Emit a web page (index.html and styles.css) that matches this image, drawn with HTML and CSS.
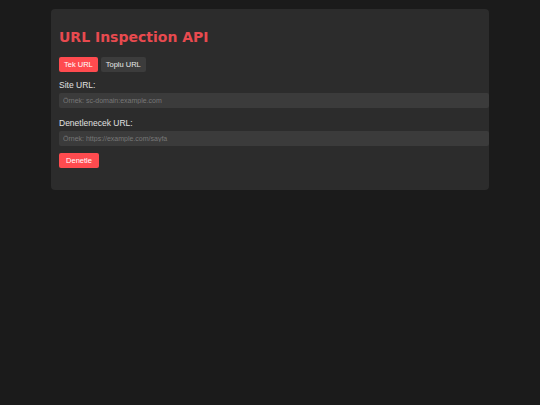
FILE: index.html
```html
<!DOCTYPE html>
<html lang="tr">
<head>
<meta charset="utf-8">
<title>URL Inspection API</title>
<link rel="stylesheet" href="styles.css">
</head>
<body>
<div class="card">
  <h1 class="title">URL Inspection API</h1>
  <div class="tabs">
    <button class="tab tab-active">Tek URL</button>
    <button class="tab">Toplu URL</button>
  </div>
  <div class="field">
    <label class="label">Site URL:</label>
    <input class="input" type="text" placeholder="Örnek: sc-domain:example.com">
  </div>
  <div class="field field-last">
    <label class="label">Denetlenecek URL:</label>
    <input class="input" type="text" placeholder="Örnek: https://example.com/sayfa">
  </div>
  <button class="submit">Denetle</button>
</div>
</body>
</html>
```

FILE: styles.css
```css
html, body {
  margin: 0;
  padding: 0;
  background: #1b1b1b;
  font-family: "Liberation Sans", Arial, sans-serif;
  color: #e6e6e6;
}
body {
  padding-top: 9px;
}
.card {
  width: 422px;
  margin: 0 auto;
  padding: 8px 8px 22px;
  background: #2c2c2c;
  border-radius: 4px;
}
.title {
  margin: 12px 0 12px;
  font-family: "DejaVu Sans", Verdana, sans-serif;
  font-weight: bold;
  font-size: 14px;
  line-height: 16px;
  color: #e84a4f;
}
.tabs {
  display: flex;
  gap: 3px;
  margin-bottom: 8px;
}
.tab {
  font-family: "Liberation Sans", Arial, sans-serif;
  font-size: 7.5px;
  line-height: 9px;
  padding: 3px 5px;
  border: none;
  border-radius: 2px;
  background: #3c3c3c;
  color: #e8e8e8;
}
.tab-active {
  background: #ff4b4f;
  color: #fff;
}
.field {
  margin-bottom: 10px;
}
.field-last {
  margin-bottom: 7px;
}
.label {
  display: block;
  font-size: 8.5px;
  line-height: 10px;
  margin-bottom: 3px;
  color: #e0e0e0;
}
.input {
  display: block;
  width: 100%;
  height: 15px;
  padding: 0 4px;
  border: none;
  border-radius: 2px;
  background: #3b3b3b;
  color: #ddd;
  font-family: "Liberation Sans", Arial, sans-serif;
  font-size: 7px;
  outline: none;
}
.input::placeholder {
  color: #777;
}
.submit {
  display: block;
  font-family: "Liberation Sans", Arial, sans-serif;
  font-size: 7.5px;
  line-height: 9px;
  padding: 3px 5px;
  width: 40px;
  border: none;
  border-radius: 2px;
  background: #ff4b4f;
  color: #fff;
}
```
